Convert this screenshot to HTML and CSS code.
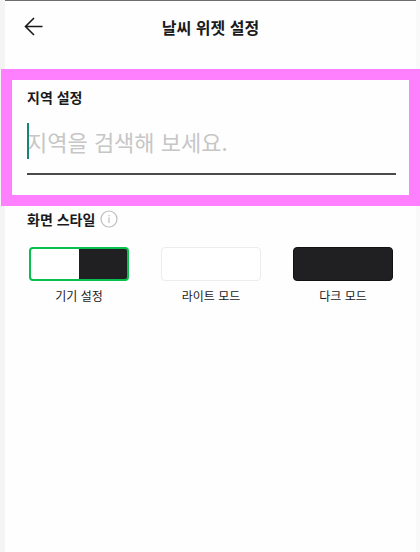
FILE: index.html
```html
<!DOCTYPE html>
<html lang="ko">
    <head>
        <meta charset="utf-8">
        <meta name="viewport" content="width=device-width, initial-scale=1">
        <title>날씨 위젯 설정</title>
        <link rel="stylesheet" href="styles.css">
    </head>
    <body>
        <div id="wrap">
            <header class="top_bar">
                <button type="button" class="btn_back" aria-label="뒤로">
                    <svg width="20" height="20" viewBox="0 0 20 20">
                        <path d="M18.5 9.5H1.5M10 1L1.5 9.5L10 18"/>
                    </svg>
                </button>
                <h1>날씨 위젯 설정</h1>
            </header>

            <!--지역 검색-->
            <section class="region_box">
                <label class="sub_title" for="region">지역 설정</label>
                <div class="search">
                    <input type="text" id="region" placeholder="지역을 검색해 보세요.">
                </div>
            </section>

            <!--화면 스타일 선택-->
            <section class="style_box">
                <div class="style_head">
                    <h2 class="sub_title">화면 스타일</h2>
                    <button type="button" class="btn_info" aria-label="도움말">
                        <svg width="18" height="18" viewBox="0 0 18 18">
                            <circle cx="9" cy="9" r="8"/>
                            <path d="M9 7.5v5.5M9 5v1.2"/>
                        </svg>
                    </button>
                </div>
                <div class="mode_list">
                    <label class="mode">
                        <input type="radio" name="mode" class="device" checked>
                        <span>기기 설정</span>
                    </label>
                    <label class="mode">
                        <input type="radio" name="mode" class="light">
                        <span>라이트 모드</span>
                    </label>
                    <label class="mode">
                        <input type="radio" name="mode" class="dark">
                        <span>다크 모드</span>
                    </label>
                </div>
            </section>
        </div>
    </body>
</html>
```

FILE: styles.css
```css
* {
    box-sizing: border-box;
}
body {
    margin: 0;
    background: linear-gradient(to right, #f4f4f4 50%, #f9f9f9 50%);
    color: #1a1a1c;
    font-family: "Noto Sans CJK KR", sans-serif;
}
button {
    display: block;
    padding: 0;
    border: 0;
    background: none;
    cursor: pointer;
}
svg {
    display: block;
    fill: none;
}
#wrap {
    min-height: 100vh;
    margin: 0 4px 0 5px;
    border-top: 1px solid #6e6e6e;
    background-color: #fefefe;
}
.top_bar {
    display: grid;
    grid-template-columns: 20px 1fr 20px;
    align-items: center;
    height: 68px;
    padding: 0 19px 16px;
}
.top_bar h1 {
    margin: 0;
    font-size: 16px;
    line-height: 24px;
    text-align: center;
}
.btn_back svg {
    stroke: #1a1a1c;
    stroke-width: 1.6;
}
.sub_title {
    display: block;
    margin: 0;
    font-size: 14px;
    font-weight: bold;
    line-height: 24px;
}
.region_box {
    margin: 0 -4px;
    padding: 5px 13px 20px 15px;
    border: 11px solid #ff80ff;
}
.search {
    position: relative;
    padding: 14px 0;
    border-bottom: 2px solid #4a4a4a;
}
/*입력 커서*/
.search::before {
    content: "";
    position: absolute;
    top: 14px;
    left: 0;
    width: 2px;
    height: 36px;
    background-color: #148577;
}
.search input {
    display: block;
    width: 100%;
    height: 36px;
    padding: 0;
    border: 0;
    outline: 0;
    background: none;
    font-family: inherit;
    font-size: 22px;
}
.search input::placeholder {
    color: #c6c6c6;
    opacity: 1;
}
.style_box {
    padding: 1px 21px 0 22px;
}
.style_head {
    display: flex;
    align-items: center;
    gap: 5px;
}
.btn_info svg {
    stroke: #bcbcc2;
    stroke-width: 1.2;
}
.mode_list {
    display: grid;
    grid-template-columns: repeat(3, 1fr);
    gap: 32px;
    padding: 16px 2px;
}
.mode {
    font-size: 12px;
    line-height: 18px;
    text-align: center;
    cursor: pointer;
}
.mode input {
    display: block;
    appearance: none;
    width: 100%;
    height: 34px;
    margin: 0 0 6px;
    border: 1px solid #ececec;
    border-radius: 4px;
    cursor: pointer;
}
.mode .device {
    background: linear-gradient(to right, #ffffff 50%, #202022 50%);
}
.mode .light {
    background-color: #ffffff;
}
.mode .dark {
    border-color: #121212;
    background-color: #202022;
}
.mode input:checked {
    border: 2px solid #06c050;
}
```
